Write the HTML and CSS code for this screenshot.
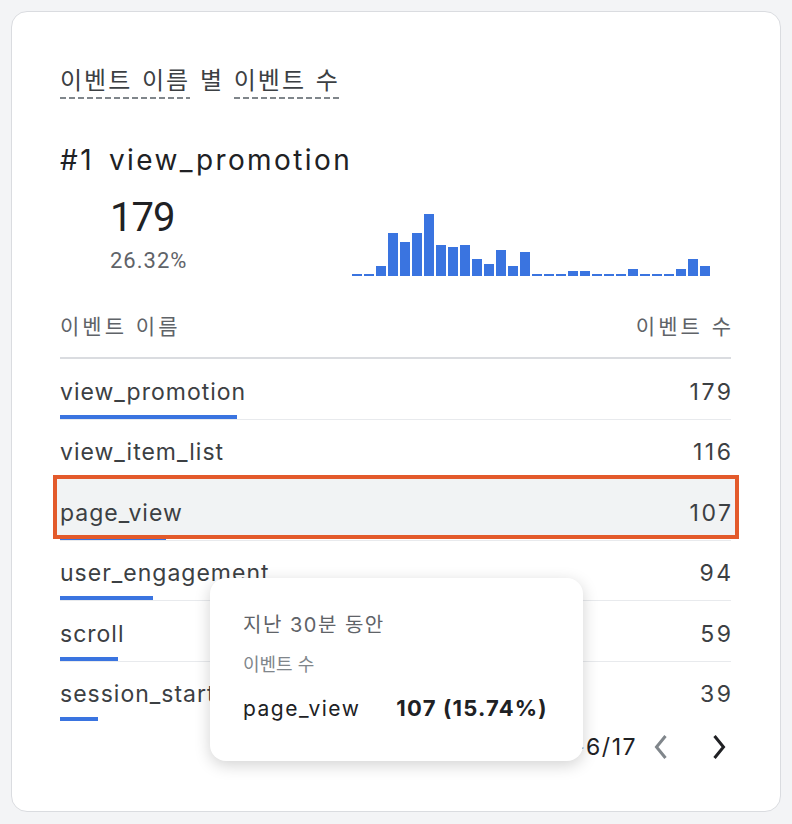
FILE: index.html
```html
<!DOCTYPE html>
<html lang="ko">
<head>
    <meta charset="UTF-8">
    <meta name="viewport" content="width=device-width, initial-scale=1.0">
    <title>이벤트 이름 별 이벤트 수</title>
    <link rel="stylesheet" href="styles.css">
</head>
<body>

<div class="card">
    <!-- Card title -->
    <h2 class="card-title"><span class="dotted">이벤트 이름</span> 별 <span class="dotted">이벤트 수</span></h2>

    <!-- Top event + sparkline -->
    <div class="top-item">
        <div class="top-name"><span class="rank">#1</span>view_promotion</div>
        <div class="top-body">
            <div class="top-stats">
                <div class="top-value">179</div>
                <div class="top-share">26.32%</div>
            </div>
            <div class="spark">
                <span class="spark-bar" style="height:2px"></span>
                <span class="spark-bar" style="height:2px"></span>
                <span class="spark-bar" style="height:10px"></span>
                <span class="spark-bar" style="height:43px"></span>
                <span class="spark-bar" style="height:34px"></span>
                <span class="spark-bar" style="height:43px"></span>
                <span class="spark-bar" style="height:62px"></span>
                <span class="spark-bar" style="height:31px"></span>
                <span class="spark-bar" style="height:29px"></span>
                <span class="spark-bar" style="height:31px"></span>
                <span class="spark-bar" style="height:17px"></span>
                <span class="spark-bar" style="height:12px"></span>
                <span class="spark-bar" style="height:26px"></span>
                <span class="spark-bar" style="height:10px"></span>
                <span class="spark-bar" style="height:24px"></span>
                <span class="spark-bar" style="height:2px"></span>
                <span class="spark-bar" style="height:2px"></span>
                <span class="spark-bar" style="height:2px"></span>
                <span class="spark-bar" style="height:5px"></span>
                <span class="spark-bar" style="height:5px"></span>
                <span class="spark-bar" style="height:2px"></span>
                <span class="spark-bar" style="height:2px"></span>
                <span class="spark-bar" style="height:2px"></span>
                <span class="spark-bar" style="height:7px"></span>
                <span class="spark-bar" style="height:2px"></span>
                <span class="spark-bar" style="height:2px"></span>
                <span class="spark-bar" style="height:2px"></span>
                <span class="spark-bar" style="height:7px"></span>
                <span class="spark-bar" style="height:17px"></span>
                <span class="spark-bar" style="height:10px"></span>
            </div>
        </div>
    </div>

    <!-- Event table -->
    <div class="table">
        <div class="table-head">
            <span>이벤트 이름</span>
            <span>이벤트 수</span>
        </div>
        <div class="table-row">
            <div class="cell-name">
                <div class="name">view_promotion</div>
                <div class="share-bar" style="width:177px"></div>
            </div>
            <div class="cell-value">179</div>
        </div>
        <div class="table-row">
            <div class="cell-name">
                <div class="name">view_item_list</div>
                <div class="share-bar" style="width:115px"></div>
            </div>
            <div class="cell-value">116</div>
        </div>
        <div class="table-row is-active">
            <div class="cell-name">
                <div class="name">page_view</div>
                <div class="share-bar" style="width:106px"></div>
            </div>
            <div class="cell-value">107</div>
        </div>
        <div class="table-row">
            <div class="cell-name">
                <div class="name">user_engagement</div>
                <div class="share-bar" style="width:93px"></div>
            </div>
            <div class="cell-value">94</div>
        </div>
        <div class="table-row">
            <div class="cell-name">
                <div class="name">scroll</div>
                <div class="share-bar" style="width:58px"></div>
            </div>
            <div class="cell-value">59</div>
        </div>
        <div class="table-row">
            <div class="cell-name">
                <div class="name">session_start</div>
                <div class="share-bar" style="width:38px"></div>
            </div>
            <div class="cell-value">39</div>
        </div>
    </div>

    <!-- Pagination -->
    <div class="pager">
        <span class="pager-label">1-6/17</span>
        <button class="pager-btn is-disabled" aria-label="이전">
            <svg width="24" height="28" viewBox="0 0 24 28"><polyline points="16.5,3 7.5,14 16.5,25" fill="none" stroke="currentColor" stroke-width="3"/></svg>
        </button>
        <button class="pager-btn" aria-label="다음">
            <svg width="24" height="28" viewBox="0 0 24 28"><polyline points="7.5,3 16.5,14 7.5,25" fill="none" stroke="currentColor" stroke-width="3"/></svg>
        </button>
    </div>

    <!-- Hover tooltip -->
    <div class="tooltip">
        <div class="tip-period">지난 30분 동안</div>
        <div class="tip-metric">이벤트 수</div>
        <div class="tip-row">
            <span class="tip-name">page_view</span>
            <span class="tip-value">107 (15.74%)</span>
        </div>
    </div>
</div>

</body>
</html>
```

FILE: styles.css
```css
body {
    margin: 0;
    padding: 11px;
    background-color: #f3f4f6;
    font-family: 'Inter', 'Noto Sans CJK KR', sans-serif;
    color: #3c4043;
}
.card {
    position: relative;
    box-sizing: border-box;
    width: 770px;
    height: 801px;
    padding: 56px 49px 0 48px;
    background-color: #fff;
    border: 1px solid #dadce0;
    border-radius: 16px;
    overflow: hidden;
}

/* title with dotted "definition" underlines */
.card-title {
    margin: 0;
    font-size: 24px;
    font-weight: 400;
    line-height: 26px;
    letter-spacing: 2px;
    word-spacing: 1px;
    color: #3c4043;
}
.dotted {
    display: inline-block;
    padding-bottom: 5px;
    background-image: linear-gradient(to right, #80868b 6px, transparent 6px);
    background-size: 9px 2px;
    background-repeat: repeat-x;
    background-position: left bottom;
}

/* top event */
.top-item {
    margin-top: 43px;
}
.top-name {
    font-size: 28px;
    line-height: 36px;
    letter-spacing: 2.4px;
    color: #202124;
}
.rank {
    margin-right: 15px;
}
.top-body {
    display: flex;
    height: 80px;
    margin-top: 18px;
    padding-left: 50px;
}
.top-stats {
    width: 242px;
}
.top-value {
    font-family: 'Roboto', sans-serif;
    font-size: 40px;
    line-height: 44px;
    letter-spacing: -1px;
    color: #202124;
}
.top-share {
    margin-top: 9px;
    font-family: 'Roboto', sans-serif;
    font-size: 22px;
    line-height: 24px;
    letter-spacing: 1px;
    color: #5f6368;
}
.spark {
    display: flex;
    align-items: flex-end;
    gap: 2px;
}
.spark-bar {
    width: 10px;
    background-color: #3a74e0;
}

/* table */
.table-head {
    display: flex;
    justify-content: space-between;
    margin-top: 39px;
    padding-bottom: 18px;
    border-bottom: 2px solid #dadce0;
    font-size: 21px;
    line-height: 24px;
    letter-spacing: 3px;
    color: #5f6368;
}
.table-head span:last-child {
    margin-right: -3px;
}
.table-row {
    position: relative;
    display: flex;
    justify-content: space-between;
    box-sizing: border-box;
    height: 60.5px;
    border-bottom: 1px solid #e8eaed;
    font-size: 23px;
    line-height: 26px;
}
.table-row:last-child {
    border-bottom: none;
}
.cell-name,
.cell-value {
    position: relative;
    z-index: 1;
    padding-top: 19.5px;
}
.name {
    letter-spacing: 1px;
}
.cell-value {
    letter-spacing: 2.5px;
    margin-right: -2.5px;
}
.share-bar {
    height: 4px;
    margin-top: 10px;
    background-color: #3a74e0;
}

/* selected row: grey fill under the text, orange frame on top */
.table-row.is-active::before,
.table-row.is-active::after {
    content: "";
    position: absolute;
    top: -5px;
    bottom: 1px;
    left: -7px;
    right: -8px;
}
.table-row.is-active::before {
    z-index: 0;
    background-color: #f1f3f4;
}
.table-row.is-active::after {
    z-index: 2;
    border: 4px solid #e35a2b;
}

/* pagination */
.pager {
    display: flex;
    justify-content: flex-end;
    align-items: center;
    margin-top: 11px;
    font-size: 23px;
    line-height: 26px;
    color: #202124;
}
.pager-label {
    margin-right: 12px;
    letter-spacing: 1.5px;
}
.pager-btn {
    display: flex;
    padding: 0;
    border: none;
    background: none;
    color: #202124;
}
.pager-btn + .pager-btn {
    margin-left: 34px;
}
.pager-btn.is-disabled {
    color: #80868b;
}

/* tooltip over the table */
.tooltip {
    position: absolute;
    z-index: 3;
    left: 198px;
    top: 566px;
    box-sizing: border-box;
    width: 373px;
    height: 183px;
    padding: 35px 16px 0 33px;
    background-color: #fff;
    border-radius: 16px;
    box-shadow: 0 4px 16px rgba(0, 0, 0, 0.18);
}
.tip-period {
    font-size: 20px;
    line-height: 24px;
    letter-spacing: 1.5px;
    color: #5f6368;
}
.tip-metric {
    margin-top: 16px;
    font-size: 18px;
    line-height: 24px;
    color: #80868b;
}
.tip-row {
    display: flex;
    align-items: baseline;
    margin-top: 18px;
    font-size: 21px;
    line-height: 26px;
    white-space: nowrap;
    color: #202124;
}
.tip-name {
    letter-spacing: 1.5px;
}
.tip-value {
    margin-left: 36px;
    font-size: 22px;
    font-weight: 700;
    letter-spacing: 1.2px;
}
```
